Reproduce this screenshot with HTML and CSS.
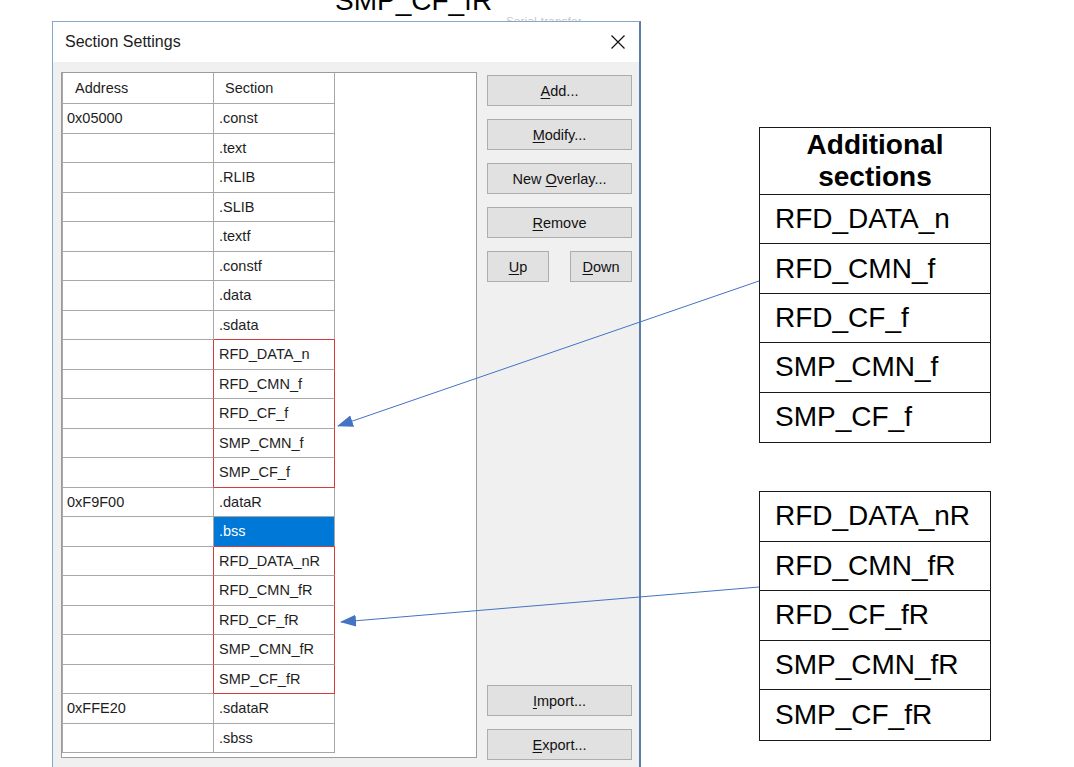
FILE: index.html
```html
<!DOCTYPE html>
<html>
<head>
<meta charset="utf-8">
<title>Section Settings</title>
<link rel="stylesheet" href="styles.css">
</head>
<body>
<div class="page">
  <div class="caption">
    <span class="cap-main">SMP_CF_fR</span>
    <span class="cap-faint">Serial transfer</span>
  </div>
  <div class="main">
    <div class="dialog">
      <div class="titlebar">
        <span class="title">Section Settings</span>
        <svg class="close" width="16" height="16" viewBox="0 0 16 16"><path d="M1.5 1.5 L14.5 14.5 M14.5 1.5 L1.5 14.5" stroke="#111" stroke-width="1.2" fill="none"/></svg>
      </div>
      <div class="dbody">
        <div class="listbox">
          <div class="grid">
            <div class="row head"><div class="cell addr">Address</div><div class="cell sec">Section</div></div>
            <div class="row"><div class="cell addr">0x05000</div><div class="cell sec">.const</div></div>
            <div class="row"><div class="cell addr"></div><div class="cell sec">.text</div></div>
            <div class="row"><div class="cell addr"></div><div class="cell sec">.RLIB</div></div>
            <div class="row"><div class="cell addr"></div><div class="cell sec">.SLIB</div></div>
            <div class="row"><div class="cell addr"></div><div class="cell sec">.textf</div></div>
            <div class="row"><div class="cell addr"></div><div class="cell sec">.constf</div></div>
            <div class="row"><div class="cell addr"></div><div class="cell sec">.data</div></div>
            <div class="row prehl"><div class="cell addr"></div><div class="cell sec">.sdata</div></div>
            <div class="row hl"><div class="cell addr"></div><div class="cell sec">RFD_DATA_n</div></div>
            <div class="row hl"><div class="cell addr"></div><div class="cell sec">RFD_CMN_f</div></div>
            <div class="row hl"><div class="cell addr"></div><div class="cell sec">RFD_CF_f</div></div>
            <div class="row hl"><div class="cell addr"></div><div class="cell sec">SMP_CMN_f</div></div>
            <div class="row hl hl-end"><div class="cell addr"></div><div class="cell sec">SMP_CF_f</div></div>
            <div class="row"><div class="cell addr">0xF9F00</div><div class="cell sec">.dataR</div></div>
            <div class="row prehl"><div class="cell addr"></div><div class="cell sec sel">.bss</div></div>
            <div class="row hl"><div class="cell addr"></div><div class="cell sec">RFD_DATA_nR</div></div>
            <div class="row hl"><div class="cell addr"></div><div class="cell sec">RFD_CMN_fR</div></div>
            <div class="row hl"><div class="cell addr"></div><div class="cell sec">RFD_CF_fR</div></div>
            <div class="row hl"><div class="cell addr"></div><div class="cell sec">SMP_CMN_fR</div></div>
            <div class="row hl hl-end"><div class="cell addr"></div><div class="cell sec">SMP_CF_fR</div></div>
            <div class="row"><div class="cell addr">0xFFE20</div><div class="cell sec">.sdataR</div></div>
            <div class="row"><div class="cell addr"></div><div class="cell sec">.sbss</div></div>
          </div>
        </div>
        <div class="btns">
          <button class="btn"><u>A</u>dd...</button>
          <button class="btn"><u>M</u>odify...</button>
          <button class="btn">New <u>O</u>verlay...</button>
          <button class="btn"><u>R</u>emove</button>
          <div class="updown">
            <button class="btn small"><u>U</u>p</button>
            <button class="btn small"><u>D</u>own</button>
          </div>
          <div class="btns-bottom">
            <button class="btn"><u>I</u>mport...</button>
            <button class="btn"><u>E</u>xport...</button>
          </div>
        </div>
      </div>
    </div>
    <div class="notes">
      <div class="ntable">
        <div class="nhead">Additional<br>sections</div>
        <div class="nrow">RFD_DATA_n</div>
        <div class="nrow">RFD_CMN_f</div>
        <div class="nrow">RFD_CF_f</div>
        <div class="nrow">SMP_CMN_f</div>
        <div class="nrow">SMP_CF_f</div>
      </div>
      <div class="ntable second">
        <div class="nrow">RFD_DATA_nR</div>
        <div class="nrow">RFD_CMN_fR</div>
        <div class="nrow">RFD_CF_fR</div>
        <div class="nrow">SMP_CMN_fR</div>
        <div class="nrow">SMP_CF_fR</div>
      </div>
    </div>
  </div>
  <svg class="arrows" width="1074" height="767" viewBox="0 0 1074 767">
    <defs>
      <marker id="ah" markerWidth="16" markerHeight="12" refX="15" refY="6" orient="auto" markerUnits="userSpaceOnUse">
        <path d="M0 0 L16 6 L0 12 Z" fill="#4472c4"/>
      </marker>
    </defs>
    <line x1="759" y1="281" x2="338" y2="426" stroke="#4472c4" stroke-width="1" marker-end="url(#ah)"/>
    <line x1="759" y1="587" x2="341" y2="622" stroke="#4472c4" stroke-width="1" marker-end="url(#ah)"/>
  </svg>
</div>
</body>
</html>
```

FILE: styles.css
```css
* { box-sizing: border-box; }

html, body {
  margin: 0;
  padding: 0;
  background: #ffffff;
}

.page {
  position: relative;
  width: 1074px;
  height: 767px;
  overflow: hidden;
  font-family: "Liberation Sans", Arial, sans-serif;
  color: #000;
}

.caption {
  display: flex;
  align-items: flex-start;
  height: 34px;
  margin-top: -13px;
}

.cap-main {
  margin-left: 335px;
  font-size: 28px;
  line-height: 28px;
  color: #000;
}

.cap-faint {
  margin-left: 14px;
  margin-top: 28px;
  font-size: 11px;
  line-height: 12px;
  color: #c4c4c4;
  letter-spacing: 0.5px;
}

.main {
  display: flex;
  align-items: flex-start;
  padding-left: 52px;
}

.dialog {
  position: relative;
  width: 589px;
  height: 760px;
  background: #f0f0f0;
  border: 1px solid #8aa6c6;
  border-right: 2px solid #5a7ea8;
  display: flex;
  flex-direction: column;
}

.titlebar {
  height: 40px;
  background: #ffffff;
  display: flex;
  align-items: center;
  justify-content: space-between;
  padding: 0 13px 0 12px;
}

.title {
  font-size: 16px;
  color: #1c1c1c;
}

.close { display: block; }

.dbody {
  display: flex;
  align-items: stretch;
  gap: 10px;
  padding: 10px 7px 0 8px;
}

.listbox {
  width: 416px;
  height: 686px;
  background: #ffffff;
  border: 1px solid #9c9c9c;
}

.grid {
  width: 273px;
  border-left: 1px solid #a8a8a8;
  font-size: 14.5px;
  color: #1e1e1e;
}

.row {
  display: flex;
  height: 29.5px;
}

.row.head { height: 31px; }

.cell {
  height: 100%;
  display: flex;
  align-items: center;
  border-right: 1px solid #a8a8a8;
  border-bottom: 1px solid #a8a8a8;
  white-space: nowrap;
}

.addr {
  width: 151px;
  padding-left: 4px;
}

.sec {
  width: 121px;
  padding-left: 5px;
}

.head .addr { padding-left: 12px; }
.head .sec { padding-left: 11px; }

.sec.sel {
  background: #0078d7;
  color: #ffffff;
}

.row.prehl .sec { border-bottom-color: #d43b3b; }
.row.hl .addr { border-right-color: #d43b3b; }
.row.hl .sec { border-right-color: #d43b3b; }
.row.hl-end .sec { border-bottom-color: #d43b3b; }

.btns {
  width: 145px;
  margin-top: 3px;
  margin-bottom: -2px;
  display: flex;
  flex-direction: column;
  gap: 13px;
}

.btn {
  height: 31px;
  width: 100%;
  background: #e1e1e1;
  border: 1px solid #adadad;
  border-radius: 0;
  font-family: "Liberation Sans", Arial, sans-serif;
  font-size: 14.5px;
  color: #111;
  padding: 0;
  margin: 0;
}

.btn u { text-decoration-thickness: 1px; text-underline-offset: 2px; }

.updown {
  display: flex;
  justify-content: space-between;
}

.btn.small { width: 62px; }

.btns-bottom {
  margin-top: auto;
  display: flex;
  flex-direction: column;
  gap: 13px;
}

.notes {
  margin-left: 118px;
  padding-top: 106px;
  width: 232px;
  display: flex;
  flex-direction: column;
}

.ntable {
  width: 232px;
  border: 1px solid #1a1a1a;
}

.ntable.second { margin-top: 48px; }

.nhead {
  height: 67px;
  border-bottom: 1px solid #1a1a1a;
  display: flex;
  align-items: center;
  justify-content: center;
  text-align: center;
  font-weight: bold;
  font-size: 28px;
  line-height: 32px;
}

.nrow {
  height: 49.4px;
  border-bottom: 1px solid #1a1a1a;
  display: flex;
  align-items: center;
  padding-left: 15px;
  font-size: 28px;
  white-space: nowrap;
}

.ntable.second .nrow { height: 49.6px; }

.nrow:last-child { border-bottom: none; }

.arrows {
  position: absolute;
  left: 0;
  top: 0;
  pointer-events: none;
}
```
